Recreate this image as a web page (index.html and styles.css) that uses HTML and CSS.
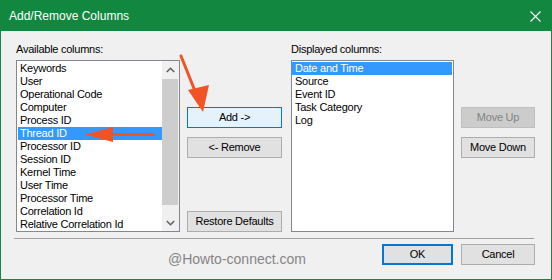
FILE: index.html
```html
<!DOCTYPE html>
<html>
<head>
<meta charset="utf-8">
<link rel="stylesheet" href="styles.css">
</head>
<body>
<div class="window">
  <div class="titlebar">
    <span class="title">Add/Remove Columns</span>
    <svg class="close" width="11" height="11" viewBox="0 0 11 11"><path d="M0.5 0.5 L10.5 10.5 M10.5 0.5 L0.5 10.5" stroke="#fff" stroke-width="1.1" fill="none"/></svg>
  </div>
  <div class="client">
    <div class="main">
      <div class="col col-left">
        <div class="label">Available columns:</div>
        <div class="listbox">
          <ul class="items">
            <li>Keywords</li>
            <li>User</li>
            <li>Operational Code</li>
            <li>Computer</li>
            <li>Process ID</li>
            <li class="sel">Thread ID</li>
            <li>Processor ID</li>
            <li>Session ID</li>
            <li>Kernel Time</li>
            <li>User Time</li>
            <li>Processor Time</li>
            <li>Correlation Id</li>
            <li>Relative Correlation Id</li>
          </ul>
          <div class="scrollbar">
            <div class="sb-btn"><svg width="9" height="6" viewBox="0 0 9 6"><path d="M0.8 5 L4.5 1.3 L8.2 5" stroke="#606060" stroke-width="1.6" fill="none"/></svg></div>
            <div class="sb-track"><div class="sb-thumb"></div></div>
            <div class="sb-btn"><svg width="9" height="6" viewBox="0 0 9 6"><path d="M0.8 1 L4.5 4.7 L8.2 1" stroke="#606060" stroke-width="1.6" fill="none"/></svg></div>
          </div>
        </div>
      </div>
      <div class="col col-mid">
        <button class="btn btn-focus">Add -&gt;</button>
        <button class="btn btn-gap">&lt;- Remove</button>
        <button class="btn btn-bottom">Restore Defaults</button>
      </div>
      <div class="col col-right">
        <div class="label">Displayed columns:</div>
        <div class="listbox listbox-right">
          <ul class="items">
            <li class="sel">Date and Time</li>
            <li>Source</li>
            <li>Event ID</li>
            <li>Task Category</li>
            <li>Log</li>
          </ul>
        </div>
      </div>
      <div class="col col-btns">
        <button class="btn btn-disabled">Move Up</button>
        <button class="btn btn-gap">Move Down</button>
      </div>
    </div>
    <div class="separator"></div>
    <div class="footer">
      <span class="watermark">@Howto-connect.com</span>
      <button class="btn btn-ok">OK</button>
      <button class="btn btn-cancel">Cancel</button>
    </div>
  </div>
  <svg class="arrows" width="552" height="280" viewBox="0 0 552 280">
    <line x1="181" y1="56" x2="197" y2="96" stroke="#f05426" stroke-width="3" stroke-linecap="round"/>
    <polygon points="203,112 188,90 209,85" fill="#f05426"/>
    <line x1="153" y1="134.5" x2="108" y2="134.5" stroke="#f05426" stroke-width="3" stroke-linecap="round"/>
    <polygon points="85,134.5 113,127 113,142" fill="#f05426"/>
  </svg>
</div>
</body>
</html>
```
FILE: styles.css
```css
* { box-sizing: border-box; }
html, body { margin: 0; padding: 0; background: #f0f0f0; }
body { font-family: "Liberation Sans", Arial, sans-serif; }

.window {
  position: relative;
  width: 552px;
  height: 280px;
  border: 1px solid #12873f;
  background: #f0f0f0;
  display: flex;
  flex-direction: column;
}

.titlebar {
  height: 30px;
  background: #12873f;
  display: flex;
  align-items: center;
  padding: 0 10px 1px 8px;
}
.title {
  color: #fff;
  font-size: 12px;
  line-height: 14px;
  flex: 1;
}
.close { display: block; margin-right: 0; margin-top: 1px; }

.client {
  flex: 1;
  padding-top: 12px;
  display: flex;
  flex-direction: column;
}

.main {
  display: flex;
  margin-left: 15px;
  height: 189px;
}

.col { display: flex; flex-direction: column; }
.col-left { width: 164px; }
.col-mid { width: 95px; margin-left: 7px; padding-top: 64px; }
.col-right { width: 163px; margin-left: 9px; }
.col-btns { width: 74px; margin-left: 7px; padding-top: 64px; }

.label {
  font-size: 11px;
  letter-spacing: -0.25px;
  line-height: 13px;
  height: 13px;
  margin-bottom: 4px;
  color: #000;
}

.listbox {
  height: 172px;
  border: 1px solid #828790;
  background: #fff;
  display: flex;
}
.items {
  flex: 1;
  list-style: none;
  margin: 0;
  padding: 1px 0 0 1px;
}
.listbox-right .items { padding: 1px 1px 0 0; }
.items li {
  height: 13px;
  line-height: 13px;
  padding-left: 2px;
  font-size: 11px;
  letter-spacing: -0.25px;
  color: #000;
  white-space: nowrap;
}
.listbox-right .items li { padding-left: 3px; }
.items li.sel { background: #3399ff; color: #fff; }

.scrollbar {
  width: 17px;
  background: #f0f0f0;
  display: flex;
  flex-direction: column;
}
.sb-btn {
  height: 17px;
  display: flex;
  align-items: center;
  justify-content: center;
}
.sb-track { flex: 1; padding: 1px 1px 0 0; }
.sb-thumb { height: 126px; background: #cdcdcd; }

.btn {
  display: block;
  height: 21px;
  width: 100%;
  margin: 0;
  padding: 0;
  border: 1px solid #adadad;
  background: #e1e1e1;
  font-family: "Liberation Sans", Arial, sans-serif;
  font-size: 11px;
  letter-spacing: -0.25px;
  line-height: 19px;
  color: #000;
  text-align: center;
}
.btn-gap { margin-top: 9px; }
.btn-bottom { margin-top: auto; }
.btn-focus { background: #e5f1fb; border-color: #0078d7; }
.btn-disabled { background: #cccccc; border-color: #bfbfbf; color: #838383; }

.separator {
  margin: 6px 0 0 13px;
  width: 520px;
  height: 1px;
  background: #a0a0a0;
}

.footer {
  display: flex;
  align-items: flex-start;
  padding: 5px 16px 0 0;
}
.watermark {
  margin: 7px auto 0 167px;
  font-size: 14px;
  line-height: 16px;
  color: #858585;
}
.btn-ok { width: 71px; border: 2px solid #0078d7; line-height: 17px; }
.btn-cancel { width: 74px; margin-left: 8px; }

.arrows {
  position: absolute;
  left: -1px;
  top: -1px;
  pointer-events: none;
}
```
